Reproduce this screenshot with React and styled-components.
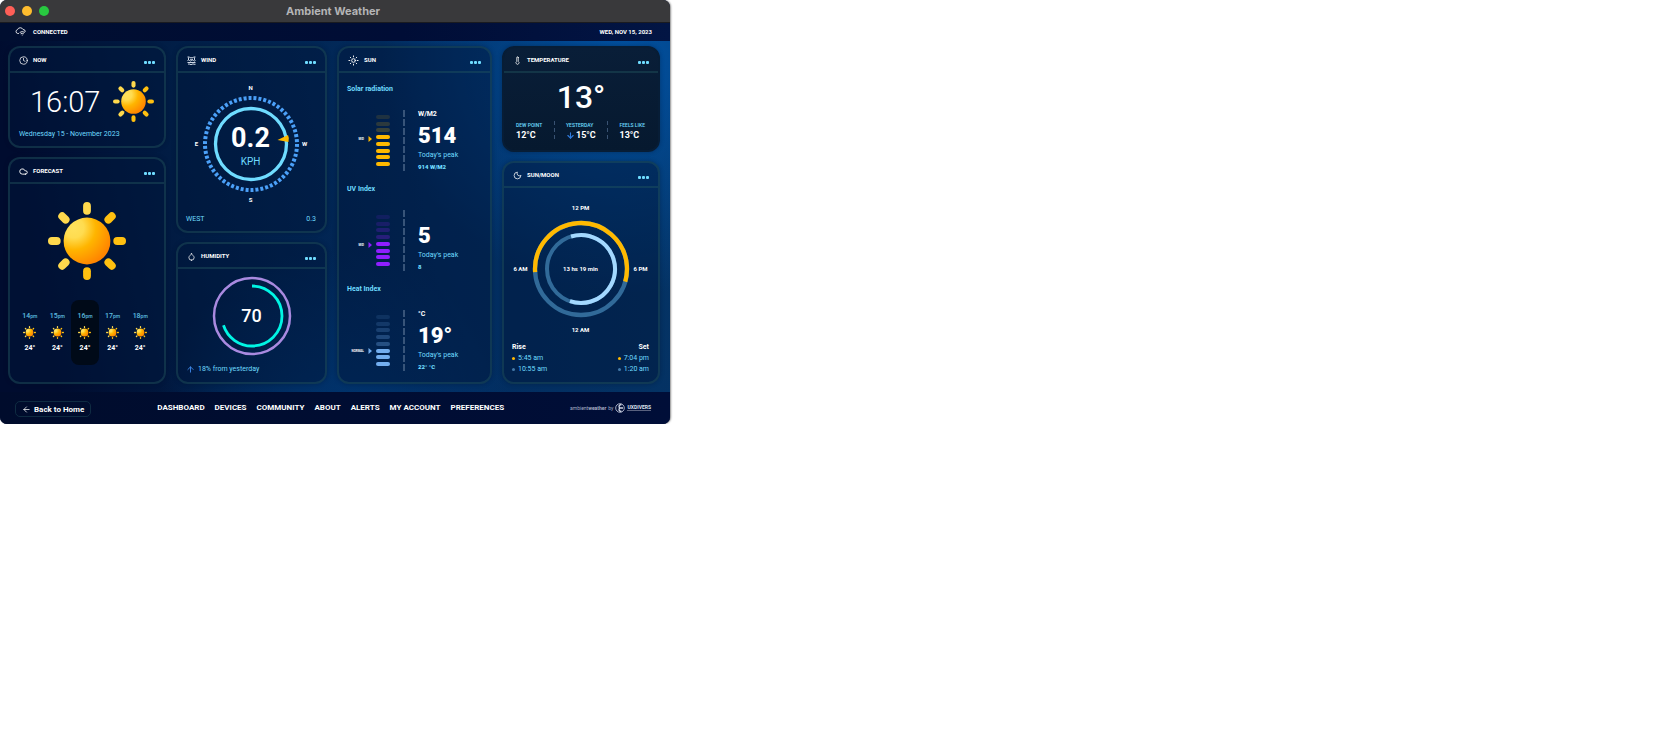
import React, { useId } from 'react';
import styled, { createGlobalStyle } from 'styled-components';
import { ArrowDown, ArrowLeft, ArrowUp, Clock, Cloud, Droplet, Moon, Sun, Thermometer } from 'lucide-react';

const C = {
  sky: '#6fdcff',
  blue: '#4ba0f8',
  amber: '#ffb900',
  line: 'rgba(36, 88, 96, 0.42)',
  bar: '#000c33',
};

const GlobalStyle = createGlobalStyle`
  * { box-sizing: border-box; }
  body {
    margin: 0;
    background: #fff;
    color: #fff;
    font-family: Roboto, "Liberation Sans", sans-serif;
  }
  h1, h2, h3, p, ul, dl, dd { margin: 0; padding: 0; }
  ul { list-style: none; }
  button { font: inherit; color: inherit; border: 0; padding: 0; background: none; cursor: pointer; }
  a { color: inherit; text-decoration: none; }
  svg { display: block; flex: none; }
`;

const Window = styled.div`
  width: 100%;
  max-width: 670px;
  border-radius: 7px;
  overflow: hidden;
  background: ${C.bar};
  box-shadow: 1px 0 2px rgba(0, 0, 0, 0.45);
`;

const TitleBar = styled.header`
  display: grid;
  grid-template-columns: 1fr auto 1fr;
  align-items: center;
  height: 23px;
  padding: 0 9px 1px 5px;
  background: #39393b;
  border-bottom: 1px solid #1a1b20;
`;

const Lights = styled.div`
  display: flex;
  gap: 7px;
`;

const Light = styled.button`
  width: 10px;
  height: 10px;
  border-radius: 50%;
  background: ${(p) => p.$color};
`;

const WindowTitle = styled.h1`
  font: bold 11px/20px Inter, "Liberation Sans", sans-serif;
  color: #b4b4b6;
`;

const StatusBar = styled.div`
  display: flex;
  align-items: center;
  justify-content: space-between;
  height: 18px;
  padding: 0 18px 1px 15px;
  background: linear-gradient(90deg, #000e30, #000d36 60%, #021544);
  font-size: 6px;
  font-weight: 700;
`;

const Status = styled.span`
  display: flex;
  align-items: center;
  gap: 7px;
`;

const Board = styled.main`
  display: grid;
  grid-template-columns: 158fr 151fr 155fr 158fr;
  gap: 10px;
  padding: 5px 10px 8px 8px;
  background:
    radial-gradient(circle at 93% 4%, rgba(0, 90, 180, 0.75), rgba(0, 70, 150, 0) 34%),
    radial-gradient(circle at 50% 110%, rgba(0, 60, 125, 0.7), rgba(0, 60, 120, 0) 35%),
    linear-gradient(80deg, #000c2f 8%, #011d45 30%, #022d60 65%, #053465);
`;

const Column = styled.div`
  display: flex;
  flex-direction: column;
  gap: 9px;
  min-width: 0;
`;

const Panel = styled.section`
  display: flex;
  flex-direction: column;
  flex: ${(p) => (p.$grow ? '1 1 auto' : '0 0 auto')};
  border: 2px solid ${(p) => (p.$dark ? '#071d36' : C.line)};
  border-radius: 12px;
  background: ${(p) => (p.$dark ? 'linear-gradient(#091e38, #06192f)' : 'rgba(0, 22, 58, 0.5)')};
  box-shadow: 0 0 4px rgba(0, 15, 40, 0.35);
`;

const PanelHead = styled.header`
  display: flex;
  align-items: center;
  gap: 5px;
  height: 25px;
  padding: 1px 9px 0;
  border-bottom: 2px solid ${C.line};
`;

const PanelTitle = styled.h2`
  flex: 1;
  font-size: 6px;
  line-height: 8px;
  font-weight: 700;
`;

const More = styled.button`
  display: flex;
  gap: 1px;
  padding-top: 5px;
  &::before, &::after, & > span { content: ''; width: 3px; height: 3px; border-radius: 1px; background: ${C.sky}; }
`;

function Card({ icon, title, children, ...rest }) {
  return (
    <Panel {...rest}>
      <PanelHead>
        {icon}
        <PanelTitle>{title}</PanelTitle>
        <More aria-label={`${title} options`}><span /></More>
      </PanelHead>
      {children}
    </Panel>
  );
}

function SunArt({ size }) {
  const id = useId();
  return (
    <svg width={size} height={size} viewBox="0 0 80 80" aria-hidden="true">
      <defs>
        <radialGradient id={id} cx="0.22" cy="0.22" r="0.85">
          <stop offset="0" stopColor="#ffe15c" />
          <stop offset="0.25" stopColor="#ffdc50" />
          <stop offset="0.55" stopColor="#ffb500" />
          <stop offset="1" stopColor="#ff8500" />
        </radialGradient>
      </defs>
      <circle cx="40" cy="40" r="24" fill={`url(#${id})`} />
      {[0, 45, 90, 135, 180, 225, 270, 315].map((a) => (
        <rect key={a} x="36" y="0" width="8" height="13" rx="4" fill={a === 0 || a > 180 ? '#ffd94d' : '#ffc010'} transform={`rotate(${a} 40 40)`} />
      ))}
    </svg>
  );
}

function CloudSignal() {
  return (
    <svg width="11" height="9" viewBox="0 0 22 18" fill="none" stroke="#fff" strokeWidth="1.7" strokeLinecap="round" aria-hidden="true">
      <path d="M7 13H5.500A4 4 0 0 1 5 5.200A6 6 0 0 1 16 5A4 4 0 0 1 20.500 9" />
      <path d="M10 10.500Q14.500 7 19 10.500M12 13.200Q14.500 11.500 17 13.200M14.500 16v.2" />
    </svg>
  );
}

function AirWaves() {
  return (
    <svg width="9" height="9" viewBox="0 0 18 18" fill="none" stroke="#e4ecf8" strokeWidth="1.800" aria-hidden="true">
      <path d="M1 2h4l2 2 2-2 2 2 2-2h4M3 3v5M15 3v5M6 6.500h6" />
      <path d="M1 9q2-2 4 0t4 0t4 0t4 0M1 13h16M2 16.500q2-1.500 4 0t4 0t4 0h3" />
    </svg>
  );
}

const NowBody = styled.div`
  display: flex;
  align-items: center;
  justify-content: space-between;
  padding: 8px 10px 0 20px;
`;

const Time = styled.time`
  font-size: 29px;
  line-height: 40px;
  font-weight: 300;
`;

const DateLine = styled.p`
  padding: 7px 9px;
  font-size: 7px;
  line-height: 10px;
  color: ${C.sky};
`;

const ForecastHero = styled.div`
  display: flex;
  justify-content: center;
  padding: 18px 0 20px;
`;

const Hours = styled.ul`
  display: grid;
  grid-template-columns: repeat(5, 1fr);
  padding: 0 10px 17px 6px;
`;

const Hour = styled.li`
  display: flex;
  flex-direction: column;
  align-items: center;
  gap: 5px;
  padding: 12px 0;
  border-radius: 8px;
  background: ${(p) => (p.$active ? '#000a18' : 'transparent')};
  font-size: 7px;
  line-height: 9px;
  font-weight: 700;
  & > span { color: ${C.sky}; font-size: 7px; font-weight: 500; opacity: 0.85; }
  small { font-size: 5px; }
`;

const Compass = styled.div`
  display: grid;
  grid-template-columns: 10px auto 10px;
  justify-content: center;
  justify-items: center;
  align-items: center;
  padding: 10px 2px 9px 0;
  font-size: 6px;
  line-height: 10px;
  font-weight: 700;
  & > :first-child, & > :last-child { grid-column: 1 / -1; }
`;

const Dial = styled.div`
  display: grid;
  place-items: center;
  margin: ${(p) => p.$margin || '0'};
  & > * { grid-area: 1 / 1; }
`;

const WindReading = styled.p`
  padding-top: 8px;
  text-align: center;
  font-size: 27px;
  line-height: 28px;
  font-weight: 700;
  & > span { display: block; font-size: 10px; line-height: 20px; font-weight: 400; color: ${C.sky}; }
`;

const CardFoot = styled.p`
  display: flex;
  align-items: center;
  justify-content: space-between;
  padding: 0 9px 7px 8px;
  font-size: 7px;
  line-height: 10px;
  color: ${C.sky};
`;

const Trend = styled.span`
  display: flex;
  align-items: center;
  gap: 3px;
`;

const HumidityValue = styled.p`
  font-size: 18px;
  line-height: 24px;
  font-weight: 500;
`;

const Metrics = styled.div`
  display: flex;
  flex-direction: column;
  gap: 14px;
  padding: 11px 8px;
`;

const MetricTitle = styled.h3`
  font-size: 7px;
  line-height: 11px;
  font-weight: 700;
  color: ${C.sky};
`;

const MetricBody = styled.div`
  display: grid;
  grid-template-columns: 29px 14px 28px 1fr;
  height: 60px;
  margin-top: 15px;
`;

const Pointer = styled.span`
  display: flex;
  align-items: center;
  justify-content: flex-end;
  gap: 4px;
  height: 8px;
  margin-top: ${(p) => p.$step * 6 + 7}px;
  padding-right: 4px;
  font-size: 3px;
  line-height: 4px;
  font-weight: 700;
`;

const Scale = styled.div`
  display: flex;
  flex-direction: column;
  justify-content: space-between;
  padding: 5px 0 6px;
`;

const Step = styled.span`
  height: 4px;
  border-radius: 2px;
  background: ${(p) => p.$color};
  opacity: ${(p) => p.$opacity};
`;

const Dashes = styled.span`
  justify-self: center;
  width: ${(p) => p.$width || 2}px;
  background: repeating-linear-gradient(#4a6588 0 ${(p) => p.$on || 7}px, transparent 0 ${(p) => p.$period || 9}px);
  opacity: 0.75;
`;

const Reading = styled.div`
  display: flex;
  flex-direction: column;
  font-size: 7px;
  line-height: 8px;
  font-weight: 700;
`;

const ReadingUnit = styled.span`
  height: 8px;
`;

const ReadingValue = styled.strong`
  padding-top: 4px;
  font-size: 22px;
  line-height: 28px;
`;

const Peak = styled.span`
  display: flex;
  flex-direction: column;
  line-height: 11px;
  font-size: 7px;
  color: ${C.sky};
  & > em { font-style: normal; font-weight: 400; }
  & > b { font-size: 6px; }
`;

function Metric({ title, level, step, color, unit, value, peak }) {
  return (
    <section>
      <MetricTitle>{title}</MetricTitle>
      <MetricBody>
        <Pointer $step={step}>
          {level}
          <svg width="4" height="6" viewBox="0 0 4 6"><path d="M0.500 0L4 3L0.500 6Z" fill={color} /></svg>
        </Pointer>
        <Scale>
          {Array.from({ length: 8 }, (_, i) => (
            <Step key={i} $color={color} $opacity={i >= step ? 1 : 0.12 + 0.05 * i} />
          ))}
        </Scale>
        <Dashes />
        <Reading>
          <ReadingUnit>{unit}</ReadingUnit>
          <ReadingValue>{value}</ReadingValue>
          <Peak><em>Today's peak</em><b>{peak}</b></Peak>
        </Reading>
      </MetricBody>
    </section>
  );
}

const BigTemp = styled.p`
  padding: 4px 0;
  text-align: center;
  font-size: 32px;
  line-height: 40px;
  font-weight: 500;
`;

const TempFacts = styled.dl`
  display: grid;
  grid-template-columns: auto auto auto auto auto;
  justify-content: space-between;
  padding: 0 13px 8px 12px;
`;

const Fact = styled.div`
  & > dt { font-size: 5px; line-height: 8px; font-weight: 500; color: ${C.sky}; }
  & > dd { display: flex; align-items: center; gap: 1px; justify-content: ${(p) => (p.$end ? 'flex-end' : 'flex-start')}; font-size: 9px; line-height: 13px; font-weight: 700; }
`;

const Orbit = styled(Compass)`
  grid-template-columns: 22px auto 22px;
  padding: 14px 1px 6px 0;
  line-height: 12px;
`;

const RiseSet = styled.div`
  display: flex;
  justify-content: space-between;
  padding: 0 9px 6px 8px;
`;

const TimesList = styled.dl`
  text-align: ${(p) => p.$align};
  font-size: 7px;
  line-height: 11px;
  & > dt { font-weight: 700; }
  & > dd { display: flex; align-items: center; gap: 3px; justify-content: ${(p) => (p.$align === 'right' ? 'flex-end' : 'flex-start')}; color: ${C.sky}; }
`;

const Dot = styled.i`
  width: 3px;
  height: 3px;
  border-radius: 50%;
  background: ${(p) => p.$color};
`;

const Footer = styled.footer`
  display: flex;
  align-items: center;
  justify-content: space-between;
  height: 32px;
  padding: 0 19px 0 15px;
  background: linear-gradient(90deg, #000c2c, #000e38);
`;

const BackLink = styled.a`
  display: flex;
  align-items: center;
  gap: 3px;
  height: 16px;
  padding: 0 6px;
  margin-top: 2px;
  border: 1px solid ${C.line};
  border-radius: 5px;
  font-size: 8px;
  font-weight: 700;
`;

const Nav = styled.nav`
  display: flex;
  gap: 10px;
  font-size: 8px;
  line-height: 10px;
  font-weight: 700;
`;

const Credit = styled.div`
  display: flex;
  align-items: center;
  gap: 2px;
  font-size: 5px;
  line-height: 8px;
  color: #a5adc4;
`;

const Maker = styled.b`
  font-size: 5px;
  line-height: 5px;
  border-bottom: 1px solid #59617e;
  color: #dfe4f0;
`;

const HOURS = ['14', '15', '16', '17', '18'];

export default function App() {
  return (
    <>
      <GlobalStyle />
      <Window>
        <TitleBar>
          <Lights>
            <Light $color="#ff5f57" aria-label="Close" />
            <Light $color="#febc2e" aria-label="Minimize" />
            <Light $color="#28c840" aria-label="Zoom" />
          </Lights>
          <WindowTitle>Ambient Weather</WindowTitle>
        </TitleBar>
        <StatusBar>
          <Status><CloudSignal />CONNECTED</Status>
          <time>WED, NOV 15, 2023</time>
        </StatusBar>
        <Board>
          <Column>
            <Card title="NOW" icon={<Clock size={9} />}>
              <NowBody>
                <Time>16:07</Time>
                <SunArt size={41} />
              </NowBody>
              <DateLine>Wednesday 15 - November 2023</DateLine>
            </Card>
            <Card title="FORECAST" icon={<Cloud size={9} strokeWidth={2.5} />} $grow>
              <ForecastHero><SunArt size={78} /></ForecastHero>
              <Hours>
                {HOURS.map((h) => (
                  <Hour key={h} $active={h === '16'}>
                    <span>{h}<small>pm</small></span>
                    <SunArt size={13} />
                    24°
                  </Hour>
                ))}
              </Hours>
            </Card>
          </Column>

          <Column>
            <Card title="WIND" icon={<AirWaves />}>
              <Compass>
                <span>N</span>
                <span>E</span>
                <Dial $margin="2px 0">
                  <svg width="98" height="98" viewBox="0 0 98 98" fill="none">
                    <circle cx="49" cy="49" r="46" stroke={C.blue} strokeWidth="4" pathLength="116" strokeDasharray="1.200 0.800" />
                    <circle cx="49" cy="49" r="35.500" stroke={C.sky} strokeWidth="3.300" />
                    <path d="M75.500 45L86 40Q87.500 43 86.500 47Z" fill={C.amber} />
                  </svg>
                  <WindReading>0.2<span>KPH</span></WindReading>
                </Dial>
                <span>W</span>
                <span>S</span>
              </Compass>
              <CardFoot><span>WEST</span><span>0.3</span></CardFoot>
            </Card>
            <Card title="HUMIDITY" icon={<Droplet size={9} />} $grow>
              <Dial $margin="7px 0 8px">
                <svg width="80" height="80" viewBox="0 0 80 80" fill="none">
                  <circle cx="40" cy="40" r="38" stroke="#a98ae0" strokeWidth="2.500" />
                  <circle cx="40" cy="40" r="30" stroke="#00f5e4" strokeWidth="2.800" pathLength="100" strokeDasharray="70 30" transform="rotate(-90 40 40)" />
                </svg>
                <HumidityValue>70</HumidityValue>
              </Dial>
              <CardFoot><Trend><ArrowUp size={9} strokeWidth={2.5} color="#3d86e8" />18% from yesterday</Trend></CardFoot>
            </Card>
          </Column>

          <Column>
            <Card title="SUN" icon={<Sun size={11} />} $grow>
              <Metrics>
                <Metric title="Solar radiation" level="MID" step={3} color={C.amber} unit="W/M2" value="514" peak="914 W/M2" />
                <Metric title="UV Index" level="MID" step={4} color="#8f1fff" unit="" value="5" peak="8" />
                <Metric title="Heat Index" level="NORMAL" step={5} color="#73aeef" unit="°C" value="19°" peak="22° °C" />
              </Metrics>
            </Card>
          </Column>

          <Column>
            <Card title="TEMPERATURE" icon={<Thermometer size={9} />} $dark>
              <BigTemp>13°</BigTemp>
              <TempFacts>
                <Fact><dt>DEW POINT</dt><dd>12°C</dd></Fact>
                <Dashes $width={1} $on={4} $period={7} />
                <Fact $end><dt>YESTERDAY</dt><dd><ArrowDown size={9} strokeWidth={3} color="#2f7be0" />15°C</dd></Fact>
                <Dashes $width={1} $on={4} $period={7} />
                <Fact><dt>FEELS LIKE</dt><dd>13°C</dd></Fact>
              </TempFacts>
            </Card>
            <Card title="SUN/MOON" icon={<Moon size={9} />} $grow>
              <Orbit>
                <span>12 PM</span>
                <span>6 AM</span>
                <Dial $margin="6px 0">
                  <svg width="98" height="98" viewBox="0 0 98 98" fill="none">
                    <g stroke="#316a99" strokeWidth="4.300">
                      <circle cx="49" cy="49" r="46" />
                      <circle cx="49" cy="49" r="34" strokeWidth="4" />
                    </g>
                    <circle cx="49" cy="49" r="46" stroke={C.amber} strokeWidth="4.300" pathLength="360" strokeDasharray="200 160" transform="rotate(176 49 49)" />
                    <circle cx="49" cy="49" r="34" stroke="#a3d8ff" strokeWidth="4" pathLength="360" strokeDasharray="216 144" transform="rotate(-107 49 49)" />
                  </svg>
                  <span>13 hs 19 min</span>
                </Dial>
                <span>6 PM</span>
                <span>12 AM</span>
              </Orbit>
              <RiseSet>
                <TimesList $align="left">
                  <dt>Rise</dt>
                  <dd><Dot $color={C.amber} />5:45 am</dd>
                  <dd><Dot $color="#4379a8" />10:55 am</dd>
                </TimesList>
                <TimesList $align="right">
                  <dt>Set</dt>
                  <dd><Dot $color={C.amber} />7:04 pm</dd>
                  <dd><Dot $color="#4379a8" />1:20 am</dd>
                </TimesList>
              </RiseSet>
            </Card>
          </Column>
        </Board>
        <Footer>
          <BackLink href="#home"><ArrowLeft size={9} />Back to Home</BackLink>
          <Nav>
            {['DASHBOARD', 'DEVICES', 'COMMUNITY', 'ABOUT', 'ALERTS', 'MY ACCOUNT', 'PREFERENCES'].map((t) => (
              <a key={t} href={`#${t.toLowerCase().replace(' ', '-')}`}>{t}</a>
            ))}
          </Nav>
          <Credit>
            <span>ambient<b>weather</b></span>
            <span>by</span>
            <svg width="10" height="10" viewBox="0 0 10 10" fill="none" stroke="#cfd6e6">
              <circle cx="5" cy="5" r="4.300" strokeWidth="0.800" />
              <path d="M6.500 1.500Q3 2 4.500 5Q3 8 6.500 8.500M5 5h3" strokeWidth="1.400" />
            </svg>
            <Maker>UXDIVERS</Maker>
          </Credit>
        </Footer>
      </Window>
    </>
  );
}
